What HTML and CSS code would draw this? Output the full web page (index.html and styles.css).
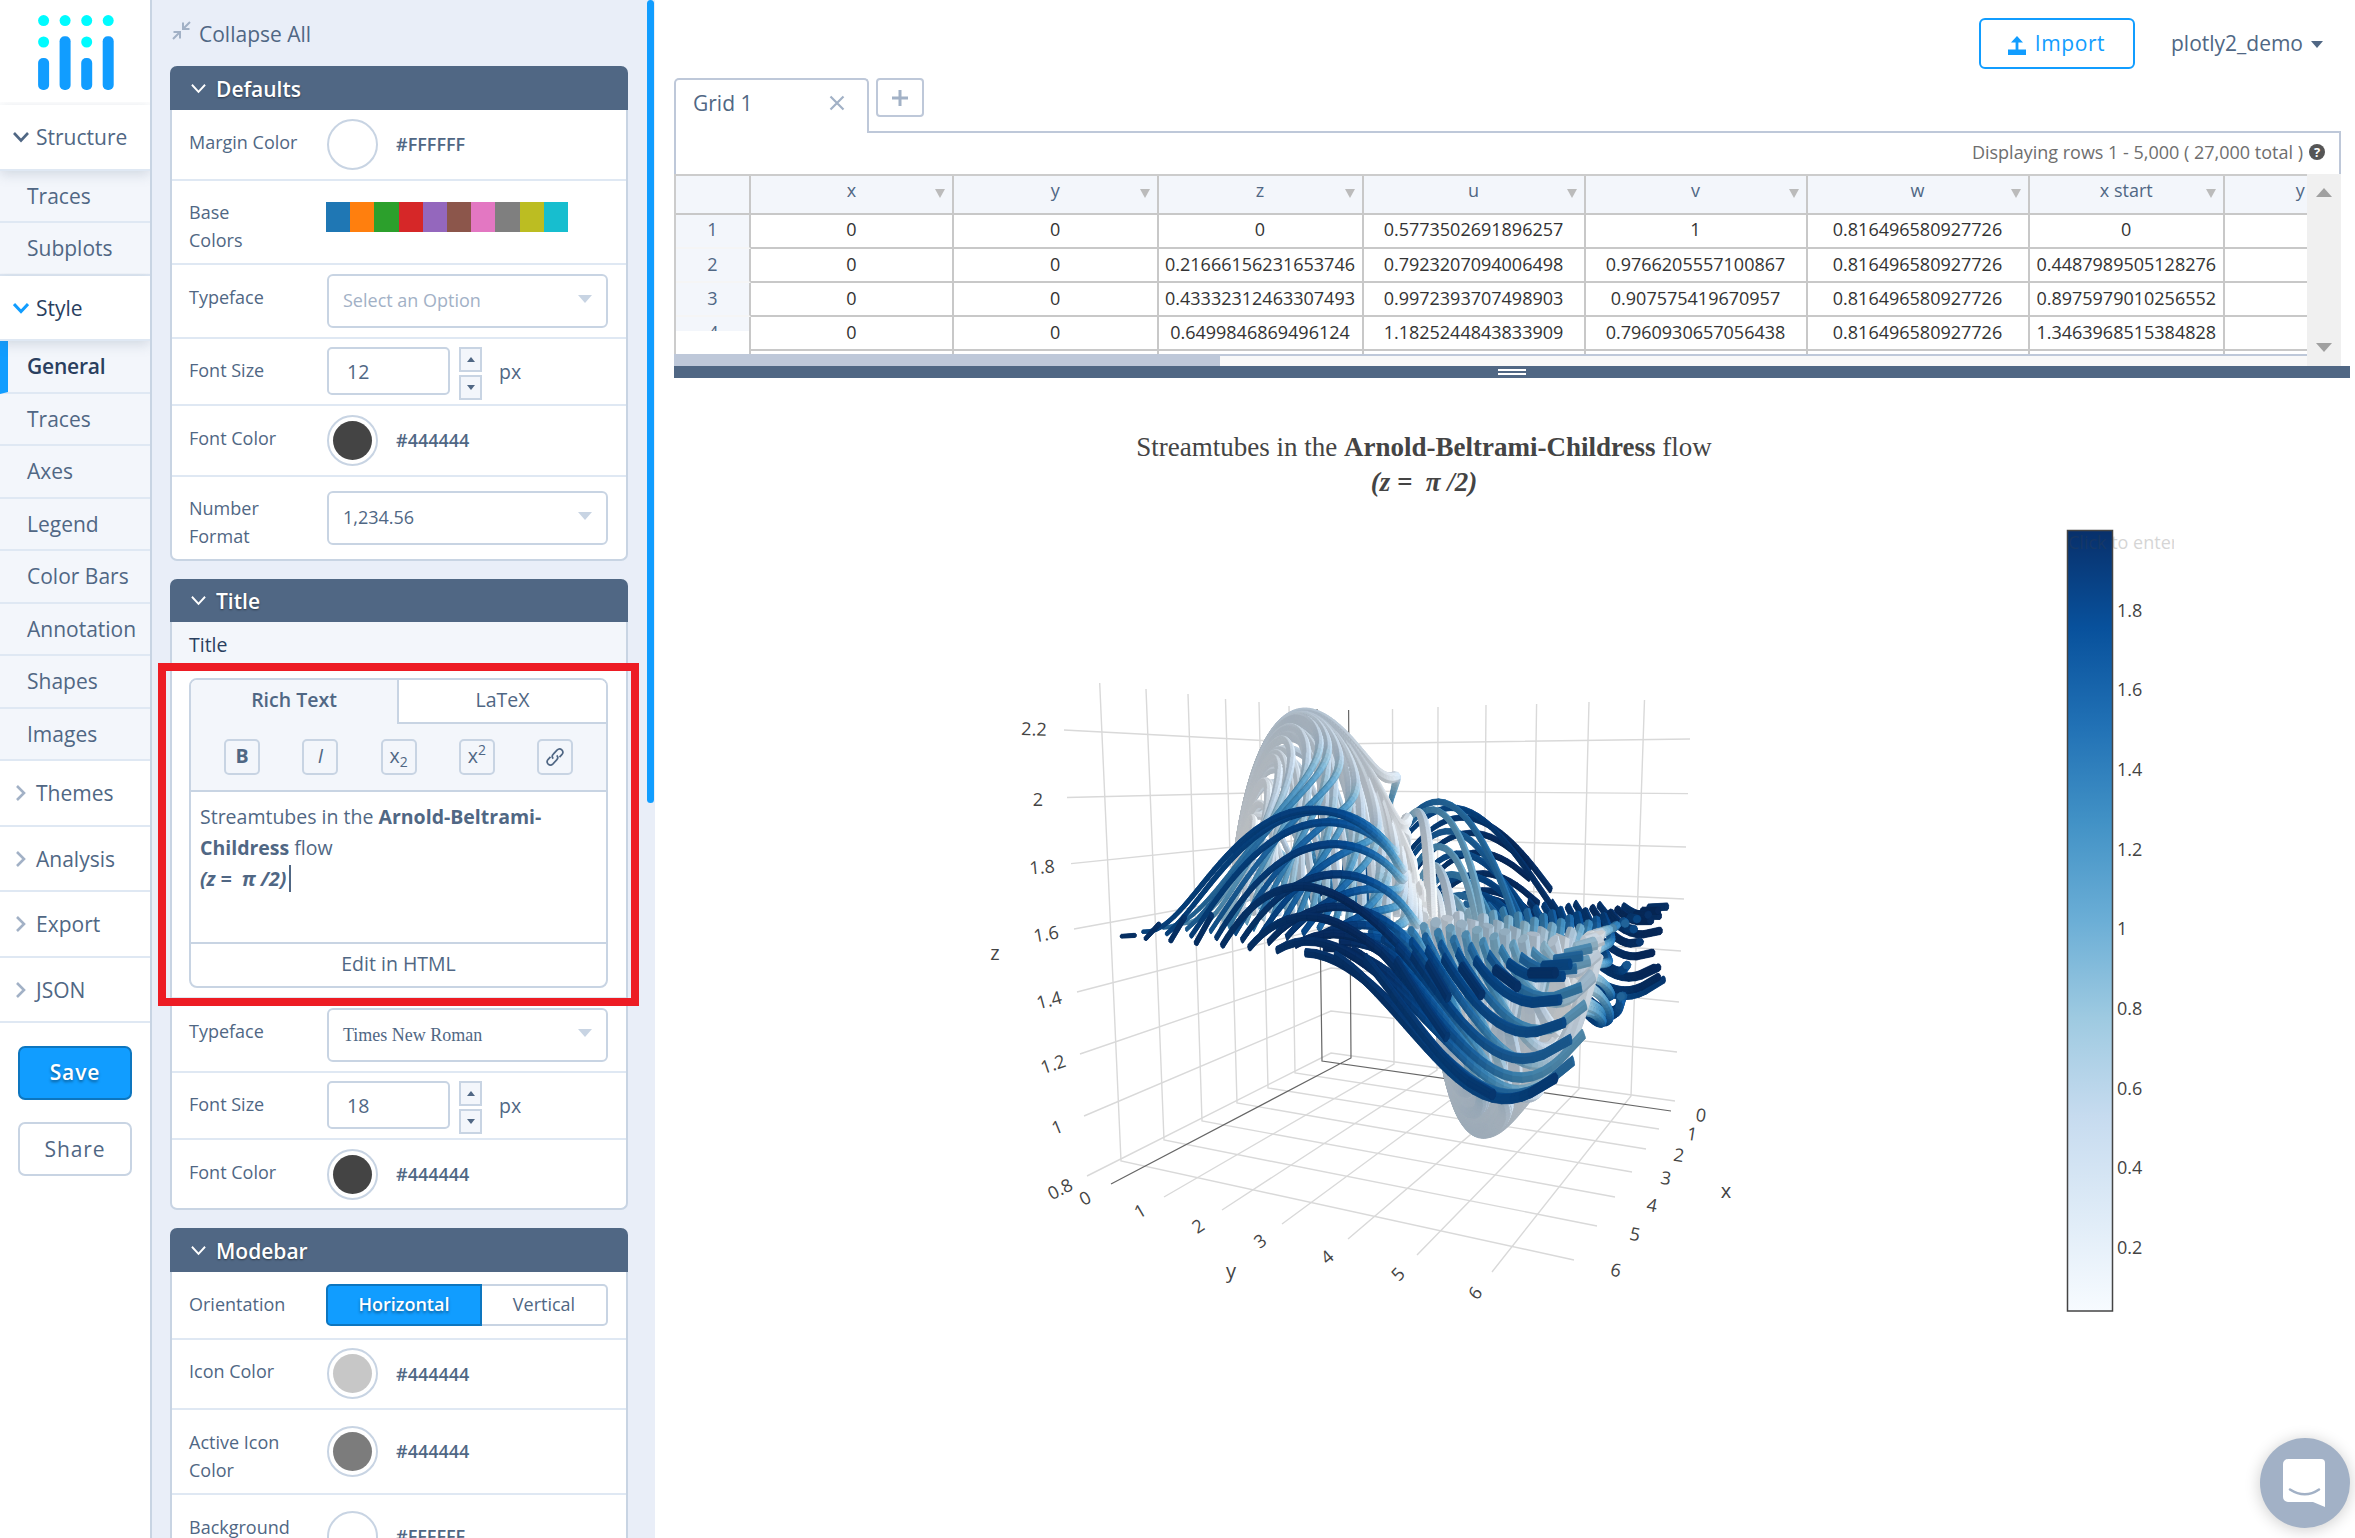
FILE: index.html
```html
<!DOCTYPE html>
<html lang="en">
<head>
<meta charset="utf-8">
<title>Chart Studio</title>
<link rel="stylesheet" href="styles.css">
</head>
<body>
<div class="app">
  <nav class="nav">
    <div class="logo">
      <svg width="76" height="76" viewBox="0 0 76 76">
        <g fill="#00fbff"><circle cx="5.6" cy="5.6" r="5.5"/><circle cx="27.1" cy="5.6" r="5.5"/><circle cx="48.7" cy="5.6" r="5.5"/><circle cx="70.2" cy="5.6" r="5.5"/><circle cx="5.6" cy="27" r="5.5"/><circle cx="48.7" cy="27" r="5.5"/></g>
        <g fill="#119dff"><rect x="0.1" y="43" width="11" height="32" rx="5"/><rect x="21.6" y="21.3" width="11" height="53.7" rx="5"/><rect x="43.2" y="43" width="11" height="32" rx="5"/><rect x="64.7" y="21.3" width="11" height="53.7" rx="5"/></g>
      </svg>
    </div>
    <div class="group first"><svg class="chev" viewBox="0 0 16 16"><path d="M1 4l7 7.5L15 4"/></svg>Structure</div>
    <a class="item h52">Traces</a>
    <a class="item h53">Subplots</a>
    <div class="group open"><svg class="chev" viewBox="0 0 16 16"><path d="M1 4l7 7.5L15 4"/></svg>Style</div>
    <a class="item h53 active">General</a>
    <a class="item h52">Traces</a>
    <a class="item h53">Axes</a>
    <a class="item h52">Legend</a>
    <a class="item h53">Color Bars</a>
    <a class="item h52">Annotation</a>
    <a class="item h53">Shapes</a>
    <a class="item h52">Images</a>
    <div class="group closed"><svg class="chev" viewBox="0 0 16 16"><path d="M4 1l7 7-7 7"/></svg>Themes</div>
    <div class="group closed"><svg class="chev" viewBox="0 0 16 16"><path d="M4 1l7 7-7 7"/></svg>Analysis</div>
    <div class="group closed"><svg class="chev" viewBox="0 0 16 16"><path d="M4 1l7 7-7 7"/></svg>Export</div>
    <div class="group closed"><svg class="chev" viewBox="0 0 16 16"><path d="M4 1l7 7-7 7"/></svg>JSON</div>
    <button class="btn save">Save</button>
    <button class="btn share">Share</button>
  </nav>

  <aside class="panel">
    <div class="collapse">
      <svg width="19" height="19" viewBox="0 0 19 19" fill="none" stroke="#a2b1c6" stroke-width="2"><path d="M18 1l-6 6M11 1.5V8h6.5M1 18l6-6M1.500 11H8v6.500"/></svg>
      <span>Collapse All</span>
    </div>

    <section class="card">
      <h2><svg class="chev" viewBox="0 0 16 16"><path d="M1 4l7 7.5L15 4"/></svg>Defaults</h2>
      <div class="row r71"><label>Margin Color</label><div class="ctl"><i class="dot"><b class="white"></b></i><span class="hex">#FFFFFF</span></div></div>
      <div class="row r84"><label>Base Colors</label><div class="ctl swatches"><i style="background:#1f77b4"></i><i style="background:#ff7f0e"></i><i style="background:#2ca02c"></i><i style="background:#d62728"></i><i style="background:#9467bd"></i><i style="background:#8c564b"></i><i style="background:#e377c2"></i><i style="background:#7f7f7f"></i><i style="background:#bcbd22"></i><i style="background:#17becf"></i></div></div>
      <div class="row r74"><label>Typeface</label><div class="ctl"><div class="select ph">Select an Option</div></div></div>
      <div class="row r67"><label>Font Size</label><div class="ctl num"><div class="input">12</div><div class="spin"><i class="up"></i><i class="down"></i></div><span>px</span></div></div>
      <div class="row r71"><label>Font Color</label><div class="ctl"><i class="dot"><b class="dark"></b></i><span class="hex">#444444</span></div></div>
      <div class="row r82 low"><label>Number Format</label><div class="ctl"><div class="select">1,234.56</div></div></div>
    </section>

    <section class="card">
      <h2 class="short"><svg class="chev" viewBox="0 0 16 16"><path d="M1 4l7 7.5L15 4"/></svg>Title</h2>
      <div class="sub">Title</div>
      <div class="editwrap">
        <div class="editor">
          <div class="tabs"><div class="on">Rich Text</div><div class="off">LaTeX</div></div>
          <div class="tools">
            <i><b>B</b></i><i><em>I</em></i><i>x<small class="dn">2</small></i><i>x<small class="upr">2</small></i>
            <i><svg width="20" height="20" viewBox="0 0 20 20" fill="none" stroke="#506784" stroke-width="1.7"><path d="M8.300 11.700c-1.400-1.400-1.300-3.200 0-4.500l3.700-4c1.500-1.500 3.500-1.500 4.800-.3 1.300 1.300 1.300 3.300 0 4.800l-2.300 2.500M11.700 8.300c1.400 1.400 1.300 3.200 0 4.500l-3.700 4c-1.500 1.500-3.500 1.500-4.800.3-1.300-1.300-1.300-3.300 0-4.800l2.300-2.500"/></svg></i>
          </div>
          <div class="text">Streamtubes in the <b>Arnold-Beltrami-Childress</b> flow<br><b><em>(z =&nbsp; π /2)</em></b><span class="caret"></span></div>
          <div class="html">Edit in HTML</div>
        </div>
        <div class="callout"></div>
      </div>
      <div class="row r74"><label>Typeface</label><div class="ctl"><div class="select times">Times New Roman</div></div></div>
      <div class="row r67"><label>Font Size</label><div class="ctl num"><div class="input">18</div><div class="spin"><i class="up"></i><i class="down"></i></div><span>px</span></div></div>
      <div class="row r68"><label>Font Color</label><div class="ctl"><i class="dot"><b class="dark"></b></i><span class="hex">#444444</span></div></div>
    </section>

    <section class="card">
      <h2><svg class="chev" viewBox="0 0 16 16"><path d="M1 4l7 7.5L15 4"/></svg>Modebar</h2>
      <div class="row r68"><label>Orientation</label><div class="ctl toggle"><div class="on">Horizontal</div><div class="off">Vertical</div></div></div>
      <div class="row r70"><label>Icon Color</label><div class="ctl"><i class="dot"><b class="light"></b></i><span class="hex">#444444</span></div></div>
      <div class="row r85 mid"><label>Active Icon Color</label><div class="ctl"><i class="dot"><b class="grey"></b></i><span class="hex">#444444</span></div></div>
      <div class="row r85 mid"><label>Background Color</label><div class="ctl"><i class="dot"><b class="white"></b></i><span class="hex">#FFFFFF</span></div></div>
    </section>
    <div class="thumb"></div>
  </aside>

  <main class="main">
    <header class="top">
      <button class="import"><svg width="20" height="20" viewBox="0 0 20 20" fill="#119dff"><path d="M10 1l6 6.500h-4.600V15H8.600V7.500H4zM1 14.500h18V20H1z"/></svg>Import</button>
      <div class="user">plotly2_demo<i></i></div>
    </header>
    <div class="gridtabs">
      <div class="gtab"><span>Grid 1</span><svg width="16" height="16" viewBox="0 0 16 16" stroke="#a2b1c6" stroke-width="2.2"><path d="M1.500 1.500l13 13M14.500 1.500l-13 13"/></svg></div>
      <div class="gadd"><svg width="16" height="16" viewBox="0 0 16 16" stroke="#a2b1c6" stroke-width="3"><path d="M8 0v16M0 8h16"/></svg></div>
      <div class="gline"></div>
    </div>
    <div class="gridinfo">Displaying rows 1 - 5,000 ( 27,000 total )<i>?</i></div>
    <div class="sheet">
      <div class="cells">
        <div class="tr th"><i></i><i>x</i><i>y</i><i>z</i><i>u</i><i>v</i><i>w</i><i>x start</i><i>y start</i></div>
        <div class="tr one"><i>1</i><i>0</i><i>0</i><i>0</i><i>0.5773502691896257</i><i>1</i><i>0.816496580927726</i><i>0</i><i></i></div>
        <div class="tr"><i>2</i><i>0</i><i>0</i><i>0.21666156231653746</i><i>0.7923207094006498</i><i>0.9766205557100867</i><i>0.816496580927726</i><i>0.4487989505128276</i><i></i></div>
        <div class="tr"><i>3</i><i>0</i><i>0</i><i>0.43332312463307493</i><i>0.9972393707498903</i><i>0.907575419670957</i><i>0.816496580927726</i><i>0.8975979010256552</i><i></i></div>
        <div class="tr"><i class="cut">4</i><i>0</i><i>0</i><i>0.6499846869496124</i><i>1.1825244843833909</i><i>0.7960930657056438</i><i>0.816496580927726</i><i>1.3463968515384828</i><i></i></div>
        <div class="tr"><i class="none"></i><i></i><i></i><i></i><i></i><i></i><i></i><i></i><i></i></div>
      </div>
      <div class="vbar"><i class="up"></i><i class="down"></i></div>
      <div class="hbar"><i></i></div>
    </div>
    <div class="splitter"><i></i></div>
    <div class="plot">
      <svg class="scene" width="1700" height="1160" viewBox="655 378 1700 1160">
        <defs>
          <linearGradient id="blues" x1="0" y1="1" x2="0" y2="0">
            <stop offset="0" stop-color="#f7fbff"/><stop offset=".125" stop-color="#deebf7"/><stop offset=".25" stop-color="#c6dbef"/><stop offset=".375" stop-color="#9ecae1"/><stop offset=".5" stop-color="#6baed6"/><stop offset=".625" stop-color="#4292c6"/><stop offset=".75" stop-color="#2171b5"/><stop offset=".875" stop-color="#08519c"/><stop offset="1" stop-color="#08306b"/>
          </linearGradient>
          <clipPath id="entry"><rect x="2060" y="520" width="114" height="40"/></clipPath>
        </defs>
        <g class="title">
          <text x="1424" y="456">Streamtubes in the <tspan class="b">Arnold-Beltrami-Childress</tspan> flow</text>
          <text x="1424" y="491" class="b it">(z =&#160; π /2)</text>
        </g>
        <g class="grid">
          <path d="M1099.700 683L1121 1161L1574 1260M1146 689L1164 1140L1597 1226M1188 694L1202 1121L1615 1197M1225.500 699L1237 1103L1632 1172M1259 702L1268 1088L1646 1149M1289 706L1295 1073L1659 1129"/>
          <path d="M1392.500 709L1394 1064L1164 1197M1438 707L1437 1070L1222 1210M1486 705L1483 1076L1282 1224M1536.600 704L1531 1083L1348 1239M1589 702L1579 1089L1417 1255M1644.500 700L1631 1096L1492 1272"/>
          <path d="M1064 730L1330 744L1690 739M1067 797.500L1331 791L1688 793.600M1071 863.600L1331 837L1686 847M1074 929L1331 882L1684 899M1077 992L1331 926L1681 951M1080 1054L1331 968L1679 1002M1084 1116L1331 1011L1677 1052M1087 1176L1331 1053L1675 1101"/>
          <path class="zero" d="M1317 709L1322 1061L1671 1111M1348.600 710L1351 1058L1111 1184"/>
        </g>
        <g class="ticks">
          <text transform="translate(1034 729) rotate(2)" dy="6.500">2.2</text>
          <text x="1038" y="805.500">2</text>
          <text transform="translate(1042 867) rotate(-5)" dy="6.500">1.8</text>
          <text transform="translate(1046 934) rotate(-10)" dy="6.500">1.6</text>
          <text transform="translate(1049 1000) rotate(-15)" dy="6.500">1.4</text>
          <text transform="translate(1053 1064) rotate(-19)" dy="6.500">1.2</text>
          <text transform="translate(1057 1127) rotate(-22)" dy="6.500">1</text>
          <text transform="translate(1060 1189) rotate(-27)" dy="6.500">0.8</text>
          <text transform="translate(1085 1198) rotate(-28)" dy="6.500">0</text>
          <text transform="translate(1140 1211) rotate(-30)" dy="6.500">1</text>
          <text transform="translate(1198 1226) rotate(-33)" dy="6.500">2</text>
          <text transform="translate(1260 1241) rotate(-36)" dy="6.500">3</text>
          <text transform="translate(1327 1257) rotate(-40)" dy="6.500">4</text>
          <text transform="translate(1398 1274) rotate(-46)" dy="6.500">5</text>
          <text transform="translate(1475 1293) rotate(-52)" dy="6.500">6</text>
          <text transform="translate(1701 1115) rotate(8)" dy="6.500">0</text>
          <text transform="translate(1692 1134) rotate(9)" dy="6.500">1</text>
          <text transform="translate(1679 1155) rotate(10)" dy="6.500">2</text>
          <text transform="translate(1666 1178) rotate(10)" dy="6.500">3</text>
          <text transform="translate(1652 1205) rotate(11)" dy="6.500">4</text>
          <text transform="translate(1635 1234) rotate(11)" dy="6.500">5</text>
          <text transform="translate(1616 1270) rotate(12)" dy="6.500">6</text>
          <g class="names"><text x="995" y="960">z</text><text x="1231" y="1278">y</text><text x="1726" y="1198">x</text></g>
        </g>
        <rect x="2067.500" y="530.500" width="45" height="780.500" fill="url(#blues)" stroke="#444" stroke-width="1.500"/>
        <g class="scale">
          <text x="2117" y="617">1.8</text><text x="2117" y="696">1.6</text><text x="2117" y="776">1.4</text><text x="2117" y="856">1.2</text><text x="2117" y="935">1</text><text x="2117" y="1015">0.8</text><text x="2117" y="1095">0.6</text><text x="2117" y="1174">0.4</text><text x="2117" y="1254">0.2</text>
        </g>
        <text class="entry" x="2068" y="549" clip-path="url(#entry)">Click to enter</text>
      </svg>
      <canvas id="tubes" width="820" height="560"></canvas>
    </div>
    <div class="chat"><svg width="44" height="50" viewBox="0 0 44 50"><path d="M5 1h33a4 4 0 0 1 4 4v44l-12-5H5a5 5 0 0 1-5-5V6a5 5 0 0 1 5-5z" fill="#fff"/><path d="M7 31.500q15 9.500 29 0" fill="none" stroke="#a2b1c6" stroke-width="2.600" stroke-linecap="round"/></svg></div>
  </main>
</div>
<script src="tubes.js"></script>
</body>
</html>
```
FILE: styles.css
```css
* { box-sizing: border-box; }
body { margin: 0; background: #fff; color: #506784; font-family: "Open Sans", sans-serif; font-size: 18px; overflow: hidden; }
i { font-style: normal; display: block; }
button { font-family: inherit; }
.app { display: flex; width: 2355px; height: 1538px; overflow: hidden; }
.chev { width: 16px; height: 16px; fill: none; stroke: currentColor; stroke-width: 2.6; flex: none; }

/* left navigation */
.nav { width: 152px; flex: none; border-right: 2px solid #c8d4e3; font-size: 21px; display: flex; flex-direction: column; }
.logo { height: 105px; padding: 15px 0 0 38px; }
.group { position: relative; height: 65.5px; flex: none; display: flex; align-items: center; gap: 7px; padding: 0 0 0 13px; border-bottom: 2px solid #dfe8f3; background: #fff; color: #506784; }
.group.first, .group.open { box-shadow: 0 3px 12px rgba(80, 103, 132, .22); clip-path: inset(-3px 0 -16px 0); z-index: 1; }
.group.first { height: 66px; }
.group.open { height: 65px; color: #2a3f5f; font-weight: 500; }
.group.open .chev { stroke: #119dff; stroke-width: 3; }
.group.closed { padding-top: 1px; }
.group.closed .chev { stroke: #a2b1c6; }
.item { display: flex; align-items: center; padding: 0 0 0 27px; background: #f3f6fb; border-bottom: 2px solid #dfe8f3; white-space: nowrap; flex: none; }
.h52 { height: 52px; }
.h53 { height: 53px; padding-bottom: 1px; }
.item.active { color: #2a3f5f; font-weight: 600; border-left: 8px solid #119dff; padding-left: 19px; letter-spacing: -.2px; }
.btn { width: 114px; height: 54px; margin: 23px 0 0 18px; border-radius: 7px; font-size: 21px; padding: 0 0 2px; letter-spacing: .9px; flex: none; }
.save { background: #119dff; border: 2px solid #0d76bf; color: #fff; font-weight: 600; text-shadow: 0 2px 3px rgba(0, 0, 0, .4); }
.share { background: #fff; border: 2px solid #c8d4e3; color: #506784; font-weight: 500; margin-top: 22px; padding-bottom: 0; }

/* settings panel */
.panel { position: relative; width: 503px; flex: none; background: #e9eef8; padding: 0 27px 0 18px; overflow: hidden; }
.collapse { height: 66px; display: flex; gap: 8px; padding: 21px 0 0 2px; font-size: 21px; line-height: 28px; }
.collapse span { margin-top: -1px; }
.thumb { position: absolute; right: 1px; top: 0; width: 7px; height: 803px; background: #119dff; border-radius: 4px; }
.card { border: 2px solid #c8d4e3; border-top: 0; border-radius: 7px; background: #fff; margin-bottom: 18px; }
.card h2 { margin: 0 -2px; height: 44px; background: #506784; border-radius: 7px 7px 0 0; color: #fff; font-size: 21px; font-weight: 600; display: flex; align-items: center; gap: 10px; padding: 1px 0 0 21px; text-shadow: 0 1px 2px rgba(0, 0, 0, .45); }
.card h2.short { height: 43px; padding-top: 0; }
.card h2 .chev { width: 15px; height: 15px; stroke-width: 2; }
.row { display: flex; border-bottom: 2px solid #dfe8f3; padding-top: 9px; overflow: hidden; }
.card .row:last-child { border-bottom: 0; }
.row label { width: 139px; padding: 9px 40px 0 17px; line-height: 28px; flex: none; color: #506784; }
.row.r71 label, .row.r74 label, .row.r67 label, .row.r68 label, .row.r70 label { white-space: nowrap; }
.row.r84 label, .row.r82 label, .row.r67 label { padding-top: 8px; }
.r71 { height: 71px; } .r84 { height: 84px; } .r74 { height: 74px; } .r67 { height: 67px; } .r82 { height: 82px; } .r70 { height: 70px; } .r68 { height: 68px; } .r85 { height: 85px; }
.r70 { padding-top: 8px; }
.ctl { display: flex; margin-left: 16px; }
.ctl > .hex { margin-left: 18px; line-height: 50px; font-weight: 600; }
.r70 .hex { padding-top: 1px; }
.dot { width: 51px; height: 51px; border: 2px solid #c8d4e3; border-radius: 50%; padding: 4px; background: #fff; }
.dot b { display: block; width: 39px; height: 39px; border-radius: 50%; }
.white { background: #fff; } .dark { background: #444; } .light { background: #c7c7c7; } .grey { background: #7c7c7c; }
.swatches { margin: 12px 0 0 15px; }
.swatches i { width: 24.200px; height: 30px; }
.select { position: relative; width: 281px; height: 54px; border: 2px solid #c8d4e3; border-radius: 6px; padding: 0 0 0 14px; line-height: 49px; white-space: nowrap; }
.select::after { content: ""; position: absolute; right: 14px; top: 19px; border: 7px solid transparent; border-top: 8px solid #c8d4e3; border-bottom: 0; }
.select.ph { color: #a2b1c6; }
.select.times { font-family: "Liberation Serif", serif; line-height: 50px; }
.low .select { margin-top: 5px; }
.low .ctl { height: 62px; }
.mid .dot { margin-top: 7px; }
.mid .hex { margin-top: 7px; }
.mid label { padding-right: 20px; }
.num { margin-top: -1px; font-size: 19.500px; }
.input { width: 123px; height: 48px; border: 2px solid #c8d4e3; border-radius: 5px; padding-left: 18px; line-height: 46px; }
.spin { margin-left: 9px; display: flex; flex-direction: column; gap: 3px; }
.spin i { width: 23px; height: 25px; border: 2px solid #c8d4e3; background: #f3f6fb; display: flex; align-items: center; justify-content: center; }
.spin i::after { content: ""; border: 4px solid transparent; border-bottom: 5px solid #506784; border-top: 0; }
.spin i.down::after { border-bottom: 0; border-top: 5px solid #506784; }
.num span { margin-left: 17px; line-height: 50px; }
.toggle { margin: 3px 0 0 15px; }
.toggle div { height: 42px; line-height: 37px; text-align: center; border: 2px solid #c8d4e3; }
.toggle .on { width: 156px; background: #119dff; border-color: #0d76bf; border-radius: 5px 0 0 5px; color: #fff; font-weight: 600; text-shadow: 0 2px 3px rgba(0, 0, 0, .4); }
.toggle .off { width: 126px; border-left: 0; border-radius: 0 5px 5px 0; }

/* title editor */
.sub { height: 43px; background: #f3f6fb; padding-left: 17px; line-height: 45px; font-size: 19.500px; font-weight: 500; color: #2a3f5f; }
.editwrap { position: relative; height: 334px; padding: 13px 18px 0 17px; border-bottom: 2px solid #dfe8f3; }
.callout { position: absolute; left: -14px; top: -2px; width: 481px; height: 343px; border: 8px solid #ed1c24; z-index: 2; }
.editor { height: 310px; border: 2px solid #c8d4e3; border-radius: 8px; font-size: 19.500px; overflow: hidden; }
.tabs { display: flex; height: 44px; background: #f3f6fb; text-align: center; line-height: 40px; }
.tabs .on { width: 206px; font-weight: 600; }
.tabs .off { flex: 1; background: #fff; border: 2px solid #c8d4e3; border-width: 0 0 2px 2px; }
.tools { height: 68px; background: #f3f6fb; border-bottom: 2px solid #c8d4e3; display: flex; gap: 42.300px; padding: 15px 0 0 33px; }
.tools i { width: 36px; height: 36px; border: 2px solid #c8d4e3; border-radius: 5px; display: flex; align-items: center; justify-content: center; line-height: 30px; padding-bottom: 2px; flex: none; }
.tools i svg { margin-top: 2px; }
.tools small { font-size: 14px; }
.dn { margin-top: 12px; }
.upr { margin-top: -12px; }
.text { height: 152px; border-bottom: 2px solid #c8d4e3; padding: 9px 8px 0 9px; line-height: 31px; }
.caret { display: inline-block; width: 2px; height: 27px; background: #506784; margin-left: 3px; vertical-align: -6px; }
.html { text-align: center; line-height: 39px; }

/* header and data grid */
.main { position: relative; flex: 1; display: flex; flex-direction: column; padding-left: 19px; }
.top { height: 78px; display: flex; justify-content: flex-end; padding: 18px 32px 0 0; font-size: 21px; }
.import { width: 156px; height: 51px; border: 2px solid #119dff; border-radius: 6px; background: #fff; color: #119dff; font-size: 21px; letter-spacing: .6px; display: flex; align-items: center; justify-content: center; gap: 8px; padding: 0 2px 2px 0; }
.import svg { margin-top: 4px; }
.user { margin-left: 36px; height: 51px; display: flex; align-items: center; gap: 8px; padding-bottom: 1px; }
.user i { border: 6px solid transparent; border-top: 7px solid #506784; border-bottom: 0; margin-top: 2px; }
.gridtabs { height: 55px; display: flex; width: 1667px; }
.gtab { width: 195px; height: 55px; border: 2px solid #bec8d9; border-bottom: 0; border-radius: 5px 5px 0 0; display: flex; align-items: center; justify-content: space-between; padding: 0 22px 7px 17px; font-size: 21px; }
.gadd { width: 48px; height: 39px; margin-left: 7px; border: 2px solid #bec8d9; border-radius: 4px; display: flex; align-items: center; justify-content: center; }
.gline { flex: 1; align-self: flex-end; height: 2px; background: #bec8d9; margin-left: -56px; }
.gridinfo { width: 1667px; height: 41px; border: solid #bec8d9; border-width: 0 2px; display: flex; justify-content: flex-end; align-items: center; gap: 6px; padding: 0 14px 3px 0; color: #6e6e6e; }
.gridinfo i { width: 16px; height: 16px; border-radius: 50%; background: #555; color: #fff; font-size: 13px; font-weight: 700; line-height: 16px; text-align: center; }
.sheet { width: 1667px; height: 192px; display: grid; grid-template: 180px 12px / 1633px 34px; }
.cells { overflow: hidden; border-top: 2px solid #ccc; border-left: 2px solid #ccc; }
.tr { display: grid; grid-template-columns: 75px 203px 204.500px 205px 222px 222px 222px 195.500px 196px; height: 34px; color: #333; }
.tr i { border-right: 2px solid #c8c8c8; border-bottom: 2px solid #c8c8c8; text-align: center; line-height: 31px; white-space: nowrap; }
.tr.one i { line-height: 29px; }
.tr i:first-child { background: #f3f6fb; color: #506784; border-bottom-color: #f5f5f5; }
.tr.th { height: 39px; }
.tr.th i { background: #f3f6fb; color: #506784; line-height: 29px; position: relative; border-bottom-color: #c8c8c8; }
.tr.th i:nth-child(n+2)::after { content: ""; position: absolute; right: 7px; top: 13px; border: 5px solid transparent; border-top: 9px solid #bbb; border-bottom: 0; }
.tr i.cut { height: 14px; overflow: hidden; border: 0; }
.tr i.none { background: #fff; margin-left: -2px; border: 0; }
.tr i.cut + i, .tr i.none + i { box-shadow: -2px 0 #c8c8c8; }
.vbar { grid-row: 1 / 3; grid-column: 2; background: #f0f0f0; display: flex; flex-direction: column; justify-content: space-between; align-items: center; padding: 14px 0; }
.vbar i { border: 8px solid transparent; }
.vbar .up { border-top: 0; border-bottom: 9px solid #a0a0a0; }
.vbar .down { border-bottom: 0; border-top: 9px solid #a0a0a0; }
.hbar { background: #f8f8f8; border-top: 2px solid #bec8d9; }
.hbar i { width: 546px; height: 10px; background: #bec8d9; }
.splitter { height: 12px; margin-right: 5px; background: #506784; padding: 3px 0 0 824px; }
.splitter i { width: 28px; height: 6px; border: solid #fff; border-width: 2px 0; }

/* chart */
.plot { position: relative; height: 1160px; margin-left: -19px; }
.scene { display: block; }
#tubes { position: absolute; left: 425px; top: 302px; }
.title text { font: 27px "Liberation Serif", serif; fill: #444; text-anchor: middle; }
.title .b { font-weight: 700; }
.title .it { font-style: italic; font-weight: 700; }
.grid path { fill: none; stroke: #d9d9d9; stroke-width: 1.400; }
.grid .zero { stroke: #666; stroke-width: 1.200; }
.ticks text { font-size: 18px; fill: #444; text-anchor: middle; }
.ticks .names text { font-size: 20px; }
.scale text { font-size: 18px; fill: #444; }
.entry { font-size: 18px; fill: #444; opacity: .22; }
.chat { position: absolute; right: 5px; top: 1438px; width: 90px; height: 90px; border-radius: 50%; background: #a2b1c6; box-shadow: 0 2px 16px rgba(0, 0, 0, .2); display: flex; align-items: center; justify-content: center; }
```
FILE: tubes.js
```js
// Streamtubes of the Arnold-Beltrami-Childress flow, traced from the plane z = pi/2.
(function () {
  var canvas = document.getElementById('tubes');
  var ctx = canvas.getContext('2d');
  var OX = 1080, OY = 680;
  var X0 = -0.37, Y0 = -0.48, Z0 = 0.79;

  // Axis anchor points: data x, y, z and their place on the page.
  var anchors = [
    [0, Y0, Z0, 1322, 1061], [1, Y0, Z0, 1295, 1073], [2, Y0, Z0, 1268, 1088], [3, Y0, Z0, 1237, 1103],
    [4, Y0, Z0, 1202, 1121], [5, Y0, Z0, 1164, 1140], [6, Y0, Z0, 1121, 1161],
    [X0, 0, Z0, 1351, 1058], [X0, 1, Z0, 1394, 1064], [X0, 2, Z0, 1437, 1070],
    [X0, 4, Z0, 1531, 1083], [X0, 5, Z0, 1579, 1089], [X0, 6, Z0, 1631, 1096],
    [6, Y0, 2.2, 1101.7, 732.3], [6, Y0, 2, 1104.7, 796.7], [6, Y0, 1.8, 1107.7, 860.3], [6, Y0, 1.6, 1110.3, 922.3],
    [6, Y0, 1.4, 1112.7, 983], [6, Y0, 1.2, 1116, 1043], [6, Y0, 1, 1118.7, 1101.7],
    [5, Y0, 2.2, 1148.7, 735.3], [4, Y0, 2.2, 1189.3, 737.3], [3, Y0, 2.2, 1227.7, 739.3],
    [5, Y0, 1.6, 1155.3, 914.3], [4, Y0, 2, 1191.7, 794.3], [4, Y0, 1.8, 1193.3, 851],
    [X0, 6, 2.2, 1643, 740], [X0, 5, 2.2, 1588.3, 741.3], [X0, 4, 2.2, 1535.7, 742], [X0, 3, 2.2, 1485.7, 742.7],
    [X0, 2, 2.2, 1438, 743.3], [X0, 1, 2.2, 1392.7, 744.3], [X0, 6, 2, 1641.3, 793.7], [X0, 6, 1.8, 1639.7, 845.3],
    [X0, 6, 1.6, 1637.3, 897], [X0, 6, 1.4, 1635.7, 948], [X0, 5, 1.8, 1585.3, 843.3], [X0, 4, 1.8, 1534.3, 842],
    [X0, Y0, 1.2, 1331, 968], [X0, Y0, 1, 1331, 1011], [X0, Y0, 0.8, 1331, 1053],
    [6, 6, Z0, 1512, 1246], [6, 3, Z0, 1310.5, 1202.3], [3, 3, Z0, 1406, 1132.6],
    [6, 5, Z0, 1441, 1230], [6, 4, Z0, 1374, 1216], [5, 6, Z0, 1537, 1214.7]
  ];

  // Least-squares fit of the 3x4 projection to the anchors.
  function fitCamera() {
    var n = 11, A = [], i, j, k;
    for (i = 0; i < n; i++) { A.push([]); for (j = 0; j <= n; j++) A[i].push(0); }
    function add(row, rhs) {
      for (var a = 0; a < n; a++) {
        for (var b = 0; b < n; b++) A[a][b] += row[a] * row[b];
        A[a][n] += row[a] * rhs;
      }
    }
    anchors.forEach(function (p) {
      var x = p[0], y = p[1], z = p[2], u = (p[3] - 1360) / 300, v = (p[4] - 950) / 300;
      add([x, y, z, 1, 0, 0, 0, 0, -u * x, -u * y, -u * z], u);
      add([0, 0, 0, 0, x, y, z, 1, -v * x, -v * y, -v * z], v);
    });
    for (i = 0; i < n; i++) {
      var best = i;
      for (j = i + 1; j < n; j++) if (Math.abs(A[j][i]) > Math.abs(A[best][i])) best = j;
      var t = A[i]; A[i] = A[best]; A[best] = t;
      for (j = 0; j < n; j++) {
        if (j === i) continue;
        var f = A[j][i] / A[i][i];
        for (k = i; k <= n; k++) A[j][k] -= f * A[i][k];
      }
    }
    return A.map(function (r, q) { return r[n] / r[q]; });
  }
  var M = fitCamera();
  function project(x, y, z) {
    var w = M[8] * x + M[9] * y + M[10] * z + 1;
    return [(M[0] * x + M[1] * y + M[2] * z + M[3]) / w * 300 + 1360 - OX,
            (M[4] * x + M[5] * y + M[6] * z + M[7]) / w * 300 + 950 - OY, w];
  }

  var B = Math.sqrt(2 / 3), C = Math.sqrt(1 / 3), T = 2 * Math.PI, ZS = 4.6;
  function flow(p) {
    return [Math.sin(p[0]) + C * Math.cos(p[1]), B * Math.sin(p[2]) + Math.cos(p[0]), C * Math.sin(p[1]) + B * Math.cos(p[2])];
  }
  function move(p, v, h) { return [p[0] + v[0] * h, p[1] + v[1] * h, p[2] + v[2] * h]; }
  function step(p, h) {
    var a = flow(p), b = flow(move(p, a, h / 2)), c = flow(move(p, b, h / 2)), d = flow(move(p, c, h));
    return [0, 1, 2].map(function (i) { return p[i] + h / 6 * (a[i] + 2 * b[i] + 2 * c[i] + d[i]); });
  }

  var stops = [[247, 251, 255], [222, 235, 247], [198, 219, 239], [158, 202, 225], [107, 174, 214], [66, 146, 198], [33, 113, 181], [8, 81, 156], [8, 48, 107]];
  function color(speed, light) {
    var t = Math.max(0, Math.min(0.9999, (speed - 0.04) / 1.96)) * 8, i = Math.floor(t), f = t - i;
    var c = [0, 1, 2].map(function (k) { return Math.round(Math.min(255, (stops[i][k] * (1 - f) + stops[i + 1][k] * f) * light)); });
    return 'rgb(' + c + ')';
  }
  function norm(v) { var l = Math.hypot(v[0], v[1], v[2]) || 1; return [v[0] / l, v[1] / l, v[2] / l]; }
  function cross(a, b) { return [a[1] * b[2] - a[2] * b[1], a[2] * b[0] - a[0] * b[2], a[0] * b[1] - a[1] * b[0]]; }

  var light = norm([-0.3, 0.85, 0.35]), SIDES = 8, quads = [];
  function tube(x0, y0) {
    var p = [x0, y0, Math.PI / 2], time = 0, rings = [], prev = null, tail = 0;
    var low = x0 === 0 ? -0.7 : 0;
    while (time < 12 && rings.length < 500) {
      var v = flow(p), speed = Math.hypot(v[0], v[1], v[2]), sl = Math.hypot(v[0], v[1], v[2] * ZS);
      if (sl < 0.02) break;
      var t = norm(v), side = prev || cross(t, [0.3, 0.2, 1]);
      var d = side[0] * t[0] + side[1] * t[1] + side[2] * t[2];
      side = norm([side[0] - d * t[0], side[1] - d * t[1], side[2] - d * t[2]]);
      prev = side;
      var up = cross(t, side), ring = [], c = project(p[0], p[1], p[2]);
      var r = (0.028 + 0.037 * Math.max(0, Math.min(1, p[1] / 4))) * (1 + 0.9 * Math.max(0, 1 - speed));
      for (var i = 0; i < SIDES; i++) {
        var a = i / SIDES * T, n = [0, 1, 2].map(function (k) { return side[k] * Math.cos(a) + up[k] * Math.sin(a); });
        ring.push({ q: project(p[0] + n[0] * r, p[1] + n[1] * r, p[2] + n[2] * r / ZS), n: n });
      }
      rings.push({ ring: ring, c: c, speed: speed });
      if (tail) break;
      var h = Math.min(0.12, 0.14 / sl);
      p = step(p, h); time += h;
      // A tube that leaves the volume ends in one straight piece.
      if (p[0] < low || p[1] < 0 || p[0] > T || p[1] > T) { tail = 1; p = move(p, flow(p), 0.22 / speed); }
    }
    for (var k = 0; k + 1 < rings.length; k++) {
      var R = rings[k], S = rings[k + 1];
      for (var j = 0; j < SIDES; j++) {
        var m = (j + 1) % SIDES, e = [R.ring[j].q, R.ring[m].q, S.ring[m].q, S.ring[j].q];
        var w = (e[0][2] + e[1][2] + e[2][2] + e[3][2]) / 4;
        var nn = norm([0, 1, 2].map(function (q) { return R.ring[j].n[q] + R.ring[m].n[q]; }));
        var l = nn[0] * light[0] + nn[1] * light[1] + nn[2] * light[2];
        quads.push({ e: e, w: w, f: color(R.speed, 0.76 + 0.28 * Math.max(0, l)) });
      }
    }
    if (rings.length > 1) [rings[0], rings[rings.length - 1]].forEach(function (E) {
      quads.push({ e: E.ring.map(function (o) { return o.q; }), w: E.c[2], f: color(E.speed, 0.82) });
    });
  }
  for (var i = 0; i < 15; i++) for (var j = 0; j < 15; j++) tube(i * T / 14, j * T / 14);
  quads.sort(function (a, b) { return b.w - a.w; });
  ctx.lineWidth = 0.4;
  quads.forEach(function (q) {
    ctx.fillStyle = ctx.strokeStyle = q.f;
    ctx.beginPath();
    q.e.forEach(function (p) { ctx.lineTo(p[0], p[1]); });
    ctx.closePath(); ctx.fill(); ctx.stroke();
  });
})();
```
